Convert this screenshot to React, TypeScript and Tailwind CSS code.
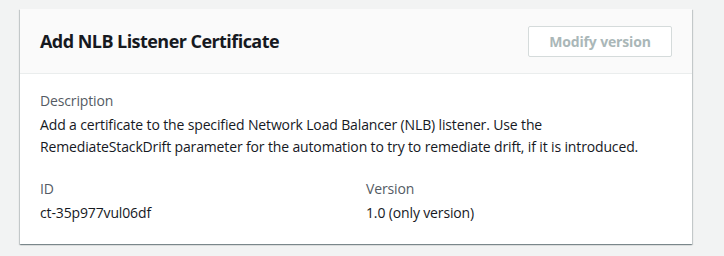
import React from "react";

export default function App() {
  return (
    <div
      className="w-[724px] h-[256px] bg-[#f2f3f3] pt-[9px] pl-[20px]"
      style={{ fontFamily: '"Open Sans", "Noto Sans", sans-serif' }}
    >
      <div className="w-[672px] bg-white shadow-[0_1px_1px_0_rgba(0,28,36,0.3),1px_1px_1px_0_rgba(0,28,36,0.15),-1px_1px_1px_0_rgba(0,28,36,0.15)]">
        <div className="h-[65px] bg-[#fafafa] border-b border-[#eaeded] flex items-center justify-between px-5">
          <h2 className="text-[18px] font-bold text-[#16191f] leading-[22px] tracking-[-0.55px]">
            Add NLB Listener Certificate
          </h2>
          <button className="w-[144px] h-[31px] border border-[#d5dbdb] rounded-[2px] bg-white text-[#aab7b8] text-[14px] font-bold tracking-[-0.15px]">
            Modify version
          </button>
        </div>
        <div className="px-5 pt-4 pb-5 text-[14px] leading-[22px] text-[#16191f] tracking-[-0.14px]">
          <div className="text-[#545b64]">Description</div>
          <div className="mt-[2px]">
            Add a certificate to the specified Network Load Balancer (NLB) listener. Use the
            <br />
            RemediateStackDrift parameter for the automation to try to remediate drift, if it is introduced.
          </div>
          <div className="grid grid-cols-2 gap-x-5 mt-[20px]">
            <div>
              <div className="text-[#545b64]">ID</div>
              <div className="mt-[2px]">ct-35p977vul06df</div>
            </div>
            <div>
              <div className="text-[#545b64]">Version</div>
              <div className="mt-[2px]">1.0 (only version)</div>
            </div>
          </div>
        </div>
      </div>
    </div>
  );
}
